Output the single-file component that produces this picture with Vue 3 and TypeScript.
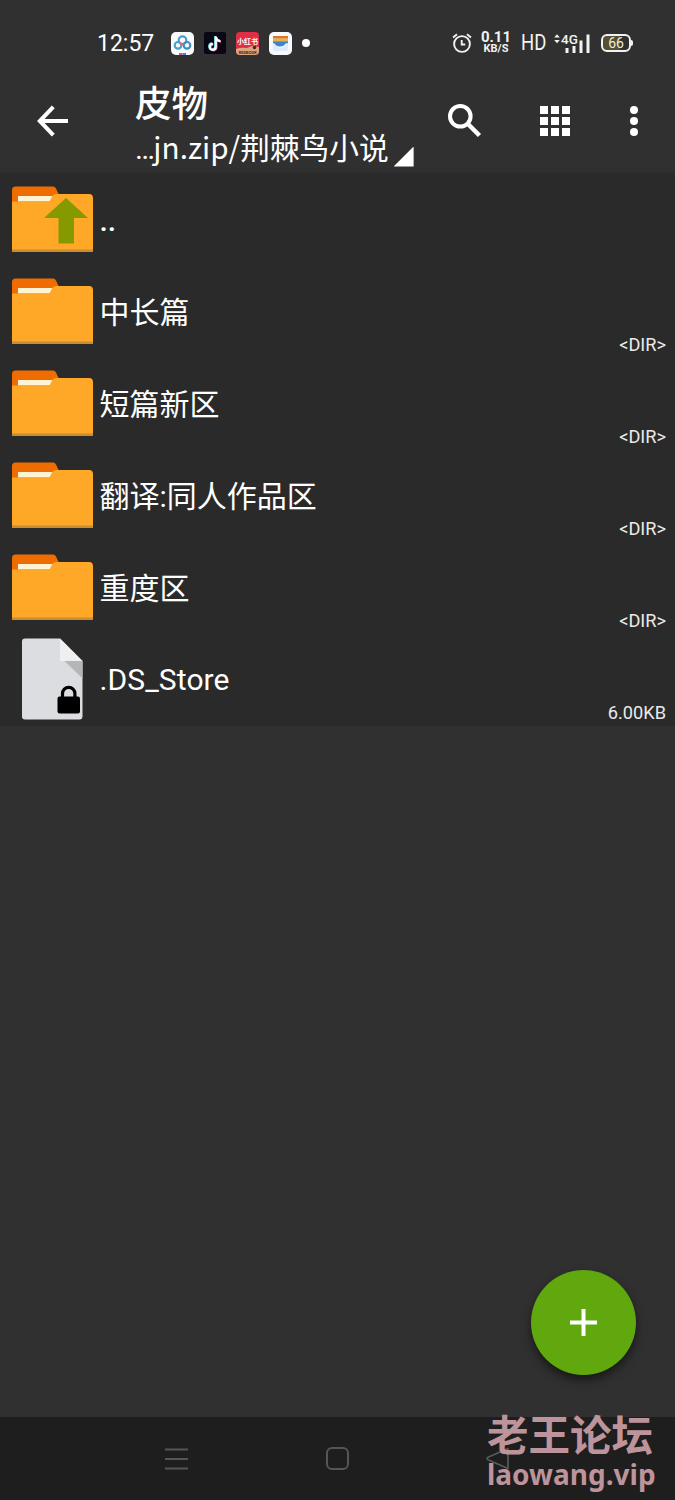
<script setup lang="ts">
interface Entry {
  name: string
  kind: 'up' | 'folder' | 'file'
  info: string
}

const entries: Entry[] = [
  { name: '..', kind: 'up', info: '' },
  { name: '中长篇', kind: 'folder', info: '<DIR>' },
  { name: '短篇新区', kind: 'folder', info: '<DIR>' },
  { name: '翻译:同人作品区', kind: 'folder', info: '<DIR>' },
  { name: '重度区', kind: 'folder', info: '<DIR>' },
  { name: '.DS_Store', kind: 'file', info: '6.00KB' },
]
</script>

<template>
  <div class="screen">
    <div class="status">
      <span class="clock">12:57</span>
      <div class="apps">
        <svg width="23" height="23" viewBox="0 0 23 23">
          <rect width="23" height="23" rx="5" fill="#f8fafc" />
          <g fill="none" stroke-width="2.2">
            <circle cx="11.5" cy="8.2" r="3.8" stroke="#4d9fc6" />
            <circle cx="7" cy="13.3" r="3.3" stroke="#44a4cc" />
            <circle cx="16" cy="13.3" r="3.3" stroke="#3e91bd" />
            <path d="M8.8 10.8 11.5 13.2" stroke="#e46b79" />
          </g>
          <path d="M8 21h3.5v2H8z" fill="#dc5365" />
          <path d="M11.5 21H15v2h-3.5z" fill="#4187c9" />
        </svg>
        <svg width="22" height="22" viewBox="0 0 22 22">
          <rect width="22" height="22" rx="2" fill="#090713" />
          <g fill="none" stroke-width="2.2">
            <path d="M11.2 4v10.3a3 3 0 1 1-3-3M11.2 4.5c.5 2.6 2 4 4.6 4.1" stroke="#56d8dd" />
            <path d="M12.4 5v10.3a3 3 0 1 1-3-3M12.4 5.5c.5 2.6 2 4 4.6 4.1" stroke="#e35c78" />
            <path d="M11.8 4.5v10.3a3 3 0 1 1-3-3M11.8 5c.5 2.6 2 4 4.6 4.1" stroke="#fff" />
          </g>
        </svg>
        <svg width="23" height="23" viewBox="0 0 23 23">
          <rect width="23" height="23" rx="4" fill="#df2e46" />
          <path d="M0 17q5-2 11-1l5-2 7 1v4q0 4-4 4H4q-4 0-4-4z" fill="#d9a67e" />
          <circle cx="18.5" cy="15.5" r="1.8" fill="#4d2521" />
          <text x="11.5" y="11.5" text-anchor="middle" class="app-text">小红书</text>
          <text x="11.7" y="21.5" text-anchor="middle" class="app-sub">REDBOOK</text>
        </svg>
        <svg width="23" height="23" viewBox="0 0 23 23">
          <rect width="23" height="23" rx="5" fill="#f6f9fe" />
          <path d="M4 4h15v2.7H4z" fill="#d77827" />
          <path d="M4 6.7h15v2.5H4z" fill="#e9b443" />
          <path d="M4 9.2h15v2l-2.500.3q-1.500 3-5.500 3t-5.500-3L4 11.2z" fill="#3986cf" />
          <path d="M4 12.200l2 .3q1.800 3.200 5.500 3.200t5.500-3.200l2-.3V17q0 2-2 2H6q-2 0-2-2z" fill="#dfeafb" />
        </svg>
        <i class="dot"></i>
      </div>
      <div class="system">
        <svg class="alarm" width="20" height="22" viewBox="0 0 20 22" fill="none" stroke="#f2f2f2" stroke-width="1.9">
          <circle cx="10" cy="12" r="7.9" />
          <path d="M9.7 8v4.5h3.5M1 5.5 5 2.3M19 5.5 15 2.3" />
        </svg>
        <div class="speed"><b>0.11</b><small>KB/S</small></div>
        <div class="hd"><span>HD</span></div>
        <svg class="signal" width="36" height="22" viewBox="0 0 36 22" fill="#f2f2f2">
          <path d="M0.2 5.5 3 2.3l2.8 3.2zM0.2 8 3 11.2 5.8 8z" />
          <text x="7" y="11.5" class="net">4G</text>
          <path d="M11.5 16h3v5h-3zM18.5 14h3v7h-3zM25.5 8.500h3V21h-3zM32.500 2.500h3V21h-3z" />
        </svg>
        <div class="battery"><span>66</span></div>
      </div>
    </div>

    <header class="toolbar">
      <svg class="back" width="32" height="32" viewBox="0 0 32 32" fill="none" stroke="#fff" stroke-width="4">
        <path d="M31 16H3M16.3 1.8 2.8 16l13.5 14.2" />
      </svg>
      <div class="heading">
        <div class="title">皮物</div>
        <div class="path"><span><span class="dots">…</span>jn.zip/荆棘鸟小说</span><i class="corner"></i></div>
      </div>
      <svg class="search" width="36" height="36" viewBox="0 0 36 36" fill="none" stroke="#fff">
        <circle cx="13.3" cy="13.3" r="10.3" stroke-width="4" />
        <path d="m21 21 11.5 11.5" stroke-width="4.5" />
      </svg>
      <div class="grid"><i v-for="n in 9" :key="n"></i></div>
      <div class="more"><i v-for="n in 3" :key="n"></i></div>
    </header>

    <main class="list">
      <div v-for="entry in entries" :key="entry.name" class="row">
        <svg v-if="entry.kind !== 'file'" class="icon" width="81" height="68" viewBox="0 0 81 68">
          <path d="M0 20V4q0-3.500 3.500-3.500H41q2 0 3 2L48 11v9z" fill="#ef6c00" />
          <path d="M6 10h35L38 15.500H6z" fill="#fff3d6" />
          <path d="M0 15.500h37.500l2.500-5Q41.500 8 44 8h33q4 0 4 4v54H0z" fill="#ffa726" />
          <path d="M0 63.500h81V66H0z" fill="#c98c32" />
          <path v-if="entry.kind === 'up'" d="M54 12 76 32H62v25.500H46.500V32H32z" fill="#859900" />
        </svg>
        <svg v-else class="icon file" width="81" height="82" viewBox="0 0 81 82">
          <path d="M13 .5h35L70.500 23v55q0 3.500-3 3.500H13q-3 0-3-3V3.500q0-3 3-3z" fill="#dcdde0" />
          <path d="M52.500 23H70.500v17.500z" fill="#b5b6b9" />
          <path d="M48 .5 70.500 23H48z" fill="#efeff1" />
          <rect x="45.500" y="58.500" width="22.500" height="17" rx="2" fill="#000" />
          <path d="M50.500 60v-4.500a6.200 6.200 0 0 1 12.400 0V60" fill="none" stroke="#000" stroke-width="3.200" />
        </svg>
        <span class="name" :class="entry.kind">{{ entry.name }}</span>
        <span class="info">{{ entry.info }}</span>
      </div>
    </main>

    <button class="fab" aria-label="Add">
      <svg width="27" height="27" viewBox="0 0 27 27"><path d="M11.500 0h4v11.500H27v4H15.500V27h-4V15.500H0v-4h11.500z" fill="#fff" /></svg>
    </button>

    <nav class="nav">
      <svg class="menu" width="24" height="22" viewBox="0 0 24 22"><path d="M0 1.500h23M0 11h23M0 20.500h23" stroke="#555" stroke-width="1.800" /></svg>
      <i class="home"></i>
      <svg class="prev" width="26" height="24" viewBox="0 0 26 24"><path d="M23 1.500v20L3.500 13q-3-1.500 0-3z" fill="none" stroke="#555b57" stroke-width="1.700" stroke-linejoin="round" /></svg>
    </nav>

    <div class="watermark">
      <div class="mark-name">老王论坛</div>
      <div class="mark-site">laowang.vip</div>
    </div>
  </div>
</template>

<style>
body {
  margin: 0;
  background: #303030;
}
</style>

<style scoped>
.screen {
  position: relative;
  display: flex;
  flex-direction: column;
  width: 675px;
  height: 1500px;
  overflow: hidden;
  background: #303030;
  color: #fff;
  font-family: Roboto, "Noto Sans CJK SC", sans-serif;
}
svg {
  display: block;
  flex: none;
}
.status {
  display: flex;
  align-items: center;
  height: 86px;
  box-sizing: border-box;
  padding-left: 97px;
}
.clock {
  width: 74px;
  padding-top: 2px;
  font: 23px/28px Roboto, sans-serif;
  white-space: nowrap;
}
.apps {
  display: flex;
  align-items: center;
  gap: 10px;
  width: 281px;
}
.app-text {
  font: 700 7px "Noto Sans CJK SC", sans-serif;
  fill: #fff;
}
.app-sub {
  font: 700 4px Roboto, sans-serif;
  fill: #50251c;
}
.dot {
  width: 8px;
  height: 8px;
  border-radius: 50%;
  background: #fff;
}
.system {
  display: flex;
  align-items: center;
  color: #f2f2f2;
}
.speed {
  display: flex;
  flex-direction: column;
  align-items: center;
  width: 32px;
  margin-left: 8px;
}
.speed b {
  font: 700 15px/12px Roboto, sans-serif;
}
.speed small {
  font: 700 11px/12px Roboto, sans-serif;
}
.hd {
  width: 33px;
  margin-left: 9px;
  font: 21.500px/24px Roboto, sans-serif;
}
.hd span {
  display: inline-block;
  transform: scaleX(0.86);
  transform-origin: left;
}
.net {
  font: 500 13.500px Roboto, sans-serif;
}
.battery {
  display: flex;
  align-items: center;
  justify-content: center;
  box-sizing: border-box;
  position: relative;
  width: 30px;
  height: 18px;
  margin-left: 11px;
  border: 2px solid #f2f2f2;
  border-radius: 6px;
  background: linear-gradient(90deg, #554f35 65%, #303030 65%);
  color: #efecd4;
  font: 14px/14px Roboto, sans-serif;
}
.battery::after {
  content: "";
  position: absolute;
  right: -4px;
  top: 4px;
  width: 2px;
  height: 6px;
  border-radius: 0 2px 2px 0;
  background: #f2f2f2;
}
.toolbar {
  display: flex;
  align-items: center;
  height: 88px;
  box-sizing: border-box;
  padding: 0 37px 18px;
  background: linear-gradient(#303030 97%, #292929);
}
.back {
  margin-right: 66px;
}
.heading {
  width: 312px;
  flex: none;
}
.title {
  margin-top: 11px;
  font: 500 36.500px/44px Roboto, "Noto Sans CJK SC", sans-serif;
}
.path {
  display: flex;
  align-items: flex-end;
  margin-top: -3px;
  font: 29.700px/45px "Noto Sans CJK SC", sans-serif;
  white-space: nowrap;
}
.dots {
  font-family: Roboto, sans-serif;
  letter-spacing: -1.500px;
}
.corner {
  width: 20px;
  height: 20px;
  margin: 0 0 4px 5px;
  clip-path: polygon(100% 0, 100% 100%, 0 100%);
  background: #fff;
}
.grid {
  display: grid;
  grid-template-columns: repeat(3, 8px);
  gap: 3.200px;
  margin-left: 57px;
}
.grid i {
  height: 8px;
  background: #fff;
}
.more {
  display: flex;
  flex-direction: column;
  gap: 3.200px;
  margin-left: 60px;
}
.more i {
  width: 8px;
  height: 8px;
  border-radius: 50%;
  background: #fff;
}
.list {
  background: #2a2a2a;
}
.row {
  display: flex;
  align-items: center;
  height: 92px;
  box-sizing: border-box;
  padding: 0 9px 0 12px;
}
.icon.file {
  margin-bottom: 3px;
}
.name {
  flex: 1;
  margin-left: 6.500px;
  padding-top: 1px;
  font-size: 30px;
  line-height: 40px;
  white-space: nowrap;
}
.name.up {
  font-weight: 500;
}
.name.file {
  padding-top: 0;
  letter-spacing: 0.1px;
}
.info {
  align-self: flex-end;
  padding-bottom: 2px;
  color: #eaeaea;
  font-size: 18.200px;
  line-height: 22px;
}
.fab {
  display: flex;
  align-items: center;
  justify-content: center;
  width: 105px;
  height: 105px;
  margin: auto 39.500px 42.500px auto;
  padding: 0;
  border: 0;
  border-radius: 50%;
  background: #60a80d;
  box-shadow: 0 5px 10px rgba(0, 0, 0, 0.5);
}
.nav {
  display: flex;
  align-items: center;
  height: 83px;
  box-sizing: border-box;
  padding-left: 165px;
  background: #1e1e1e;
}
.home {
  box-sizing: border-box;
  width: 23px;
  height: 23px;
  margin: 0 136px 0 137px;
  border: 2px solid #555;
  border-radius: 6px;
}
.watermark {
  position: absolute;
  left: 487px;
  top: 1408px;
  color: #bd949b;
  white-space: nowrap;
}
.mark-name {
  font: 700 41.500px/50px "Noto Sans CJK SC", sans-serif;
}
.mark-site {
  font: 700 28px/33px "Noto Sans", sans-serif;
}
</style>
